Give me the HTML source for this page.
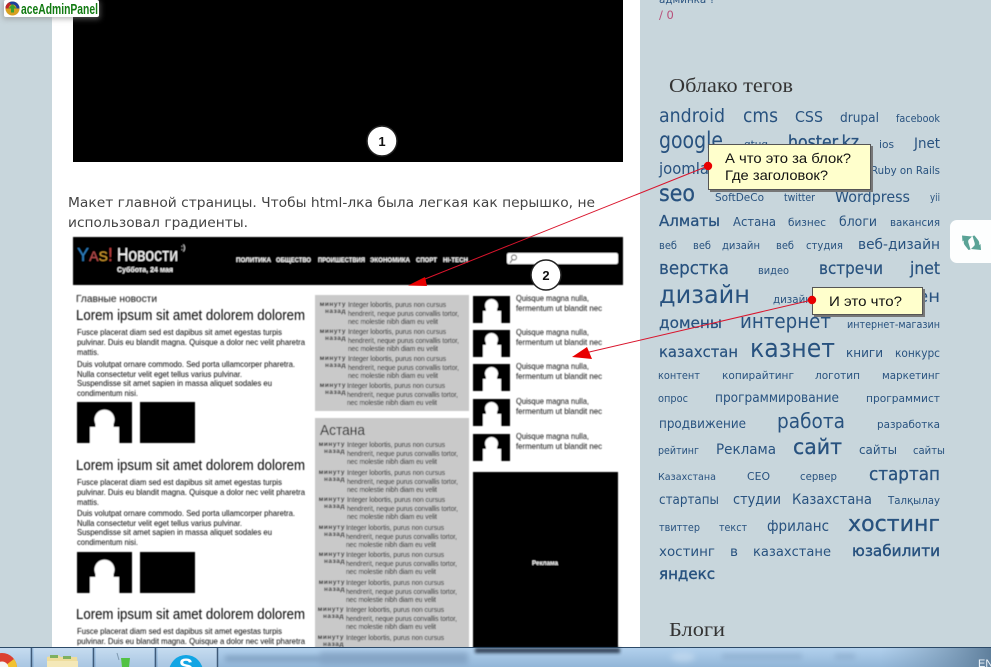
<!DOCTYPE html>
<html lang="ru"><head><meta charset="utf-8"><title>Макет</title>
<style>
html,body{margin:0;padding:0;width:991px;height:667px;overflow:hidden;background:#c8d6dc}
svg{display:block;position:absolute;left:0;top:0}
.t{font-family:"DejaVu Sans","Liberation Sans",sans-serif;fill:#28527f}
.b{font-family:"DejaVu Sans",sans-serif;font-size:13.5px;fill:#444}
.s{font-family:"Liberation Serif",serif;font-size:20px;fill:#333}
.m{font-family:"Liberation Sans",sans-serif;fill:#111}
.h{font-size:14.500px;fill:#000}
.p{font-size:8.500px;fill:#000}
.g{font-size:7.500px;fill:#000}
.r{font-size:6.500px;font-weight:bold;fill:#222;letter-spacing:.5px}
.q{font-size:8.500px;fill:#111}
.w{fill:#fff;font-family:"Liberation Sans",sans-serif}
.n{font-size:6.500px;font-weight:bold}
.a{font-family:"Liberation Sans",sans-serif;font-size:14px;fill:#111}
</style></head><body>
<svg width="991" height="667" viewBox="0 0 991 667" xmlns="http://www.w3.org/2000/svg">
<defs>
<filter id="bl" x="-5%" y="-5%" width="110%" height="110%"><feGaussianBlur stdDeviation="0.45"/></filter>
<filter id="big" x="-20%" y="-100%" width="140%" height="300%"><feGaussianBlur stdDeviation="3"/></filter>
<filter id="sm" x="-10%" y="-200%" width="120%" height="500%"><feGaussianBlur stdDeviation="1.500"/></filter>
<linearGradient id="tb" x1="0" y1="0" x2="0" y2="1"><stop offset="0" stop-color="#b4d2ee"/><stop offset="1" stop-color="#92b6d8"/></linearGradient>
<linearGradient id="tr" x1="0" y1="0" x2="1" y2="0"><stop offset="0" stop-color="#7d9cb8" stop-opacity="0"/><stop offset="1" stop-color="#5f7f9c"/></linearGradient>
<linearGradient id="btn" x1="0" y1="0" x2="0" y2="1"><stop offset="0" stop-color="#c6dcf0"/><stop offset="1" stop-color="#a9c6e2"/></linearGradient>
</defs>

<rect width="991" height="667" fill="#c8d6dc"/>
<rect x="52" y="0" width="588" height="667" fill="#fff"/>
<rect x="73" y="0" width="550" height="162" fill="#000"/>
<circle cx="382" cy="141" r="15" fill="#fff" stroke="#222" stroke-width="1.500"/>
<text x="382" y="146" text-anchor="middle" font-family="Liberation Sans,sans-serif" font-size="13" font-weight="bold" fill="#111">1</text>

<text class="b" x="68" y="207" textLength="527" lengthAdjust="spacingAndGlyphs">Макет главной страницы. Чтобы html-лка была легкая как перышко, не</text>
<text class="b" x="68" y="227" textLength="180" lengthAdjust="spacingAndGlyphs">использовал градиенты.</text>

<g filter="url(#bl)">
<rect x="73" y="237" width="550" height="48" fill="#000"/>
<text x="77" y="261" font-family="Liberation Sans,sans-serif" font-size="18" textLength="36" lengthAdjust="spacingAndGlyphs"><tspan fill="#2f7fc0">Y</tspan><tspan fill="#c05050" font-size="14">A</tspan><tspan fill="#d8a030" font-size="14">S</tspan><tspan fill="#c04040">!</tspan></text>
<text class="w" x="117" y="261" font-size="18" textLength="61" lengthAdjust="spacingAndGlyphs">Новости</text>
<text class="w" x="181" y="250" font-size="7">:)</text>
<text class="w" x="117" y="272" font-size="7.500" font-weight="bold" textLength="56" lengthAdjust="spacingAndGlyphs">Суббота, 24 мая</text>
<text class="w n" x="236" y="262" textLength="35" lengthAdjust="spacingAndGlyphs">ПОЛИТИКА</text>
<text class="w n" x="276" y="262" textLength="35" lengthAdjust="spacingAndGlyphs">ОБЩЕСТВО</text>
<text class="w n" x="318" y="262" textLength="47" lengthAdjust="spacingAndGlyphs">ПРОИШЕСТВИЯ</text>
<text class="w n" x="370" y="262" textLength="40" lengthAdjust="spacingAndGlyphs">ЭКОНОМИКА</text>
<text class="w n" x="416" y="262" textLength="21" lengthAdjust="spacingAndGlyphs">СПОРТ</text>
<text class="w n" x="443" y="262" textLength="25" lengthAdjust="spacingAndGlyphs">HI-TECH</text>
<rect x="507" y="253" width="111" height="11" rx="2" fill="#fff"/>
<circle cx="514" cy="257.500" r="2.500" fill="none" stroke="#222" stroke-width="0.900"/><path d="M512 260l-2 3" stroke="#222" stroke-width="1"/>

<text class="m" x="76" y="302" font-size="10" fill="#222" textLength="81" lengthAdjust="spacingAndGlyphs">Главные новости</text>

<text class="m h" x="76" y="320" textLength="229" lengthAdjust="spacingAndGlyphs">Lorem ipsum sit amet dolorem dolorem</text>
<text class="m p" x="77" y="335" textLength="205" lengthAdjust="spacingAndGlyphs">Fusce placerat diam sed est dapibus sit amet egestas turpis</text>
<text class="m p" x="77" y="345" textLength="228" lengthAdjust="spacingAndGlyphs">pulvinar. Duis eu blandit magna. Quisque a dolor nec velit pharetra</text>
<text class="m p" x="77" y="355" textLength="22" lengthAdjust="spacingAndGlyphs">mattis.</text>
<text class="m p" x="77" y="367" textLength="218" lengthAdjust="spacingAndGlyphs">Duis volutpat ornare commodo. Sed porta ullamcorper pharetra.</text>
<text class="m p" x="77" y="377" textLength="165" lengthAdjust="spacingAndGlyphs">Nulla consectetur velit eget tellus varius pulvinar.</text>
<text class="m p" x="77" y="386" textLength="195" lengthAdjust="spacingAndGlyphs">Suspendisse sit amet sapien in massa aliquet sodales eu</text>
<text class="m p" x="77" y="396" textLength="61" lengthAdjust="spacingAndGlyphs">condimentum nisi.</text>
<rect x="77" y="402" width="55" height="41" fill="#000"/>
<path d="M90 443V427h5.500v-3a10 10 0 1 1 18 0v3H119v16z" fill="#fff"/>
<rect x="140" y="402" width="55" height="41" fill="#000"/>

<text class="m h" x="76" y="470" textLength="229" lengthAdjust="spacingAndGlyphs">Lorem ipsum sit amet dolorem dolorem</text>
<text class="m p" x="77" y="485" textLength="205" lengthAdjust="spacingAndGlyphs">Fusce placerat diam sed est dapibus sit amet egestas turpis</text>
<text class="m p" x="77" y="495" textLength="228" lengthAdjust="spacingAndGlyphs">pulvinar. Duis eu blandit magna. Quisque a dolor nec velit pharetra</text>
<text class="m p" x="77" y="505" textLength="22" lengthAdjust="spacingAndGlyphs">mattis.</text>
<text class="m p" x="77" y="516" textLength="218" lengthAdjust="spacingAndGlyphs">Duis volutpat ornare commodo. Sed porta ullamcorper pharetra.</text>
<text class="m p" x="77" y="526" textLength="165" lengthAdjust="spacingAndGlyphs">Nulla consectetur velit eget tellus varius pulvinar.</text>
<text class="m p" x="77" y="535" textLength="195" lengthAdjust="spacingAndGlyphs">Suspendisse sit amet sapien in massa aliquet sodales eu</text>
<text class="m p" x="77" y="545" textLength="61" lengthAdjust="spacingAndGlyphs">condimentum nisi.</text>
<rect x="77" y="552" width="55" height="41" fill="#000"/>
<path d="M90 593V577h5.500v-3a10 10 0 1 1 18 0v3H119v16z" fill="#fff"/>
<rect x="140" y="552" width="55" height="41" fill="#000"/>

<text class="m h" x="76" y="619" textLength="229" lengthAdjust="spacingAndGlyphs">Lorem ipsum sit amet dolorem dolorem</text>
<text class="m p" x="77" y="634" textLength="205" lengthAdjust="spacingAndGlyphs">Fusce placerat diam sed est dapibus sit amet egestas turpis</text>
<text class="m p" x="77" y="644" textLength="228" lengthAdjust="spacingAndGlyphs">pulvinar. Duis eu blandit magna. Quisque a dolor nec velit pharetra</text>

<rect x="315" y="295" width="154" height="116" fill="#c9c9c9"/>
<rect x="315" y="418" width="154" height="232" fill="#c9c9c9"/>

<text class="m r" x="346" y="306" text-anchor="end">минуту</text><text class="m r" x="346" y="313" text-anchor="end">назад</text>
<text class="m g" x="348" y="307" textLength="98" lengthAdjust="spacingAndGlyphs">Integer lobortis, purus non cursus</text><text class="m g" x="348" y="316" textLength="111" lengthAdjust="spacingAndGlyphs">hendrerit, neque purus convallis tortor,</text><text class="m g" x="348" y="324" textLength="90" lengthAdjust="spacingAndGlyphs">nec molestie nibh diam eu velit</text>

<text class="m r" x="346" y="333" text-anchor="end">минуту</text><text class="m r" x="346" y="340" text-anchor="end">назад</text>
<text class="m g" x="348" y="334" textLength="98" lengthAdjust="spacingAndGlyphs">Integer lobortis, purus non cursus</text><text class="m g" x="348" y="343" textLength="111" lengthAdjust="spacingAndGlyphs">hendrerit, neque purus convallis tortor,</text><text class="m g" x="348" y="351" textLength="90" lengthAdjust="spacingAndGlyphs">nec molestie nibh diam eu velit</text>

<text class="m r" x="346" y="360" text-anchor="end">минуту</text><text class="m r" x="346" y="367" text-anchor="end">назад</text>
<text class="m g" x="348" y="361" textLength="98" lengthAdjust="spacingAndGlyphs">Integer lobortis, purus non cursus</text><text class="m g" x="348" y="370" textLength="111" lengthAdjust="spacingAndGlyphs">hendrerit, neque purus convallis tortor,</text><text class="m g" x="348" y="378" textLength="90" lengthAdjust="spacingAndGlyphs">nec molestie nibh diam eu velit</text>

<text class="m r" x="346" y="387" text-anchor="end">минуту</text><text class="m r" x="346" y="394" text-anchor="end">назад</text>
<text class="m g" x="347" y="388" textLength="98" lengthAdjust="spacingAndGlyphs">Integer lobortis, purus non cursus</text><text class="m g" x="347" y="397" textLength="111" lengthAdjust="spacingAndGlyphs">hendrerit, neque purus convallis tortor,</text><text class="m g" x="347" y="405" textLength="90" lengthAdjust="spacingAndGlyphs">nec molestie nibh diam eu velit</text>

<text class="m" x="320" y="435" font-size="15" fill="#111" textLength="45" lengthAdjust="spacingAndGlyphs">Астана</text>

<text class="m r" x="345" y="446" text-anchor="end">минуту</text><text class="m r" x="345" y="453" text-anchor="end">назад</text>
<text class="m g" x="347" y="447" textLength="98" lengthAdjust="spacingAndGlyphs">Integer lobortis, purus non cursus</text><text class="m g" x="347" y="456" textLength="111" lengthAdjust="spacingAndGlyphs">hendrerit, neque purus convallis tortor,</text><text class="m g" x="347" y="464" textLength="90" lengthAdjust="spacingAndGlyphs">nec molestie nibh diam eu velit</text>

<text class="m r" x="345" y="474" text-anchor="end">минуту</text><text class="m r" x="345" y="481" text-anchor="end">назад</text>
<text class="m g" x="347" y="475" textLength="98" lengthAdjust="spacingAndGlyphs">Integer lobortis, purus non cursus</text><text class="m g" x="347" y="484" textLength="111" lengthAdjust="spacingAndGlyphs">hendrerit, neque purus convallis tortor,</text><text class="m g" x="347" y="492" textLength="90" lengthAdjust="spacingAndGlyphs">nec molestie nibh diam eu velit</text>

<text class="m r" x="345" y="501" text-anchor="end">минуту</text><text class="m r" x="345" y="508" text-anchor="end">назад</text>
<text class="m g" x="347" y="502" textLength="98" lengthAdjust="spacingAndGlyphs">Integer lobortis, purus non cursus</text><text class="m g" x="347" y="511" textLength="111" lengthAdjust="spacingAndGlyphs">hendrerit, neque purus convallis tortor,</text><text class="m g" x="347" y="519" textLength="90" lengthAdjust="spacingAndGlyphs">nec molestie nibh diam eu velit</text>

<text class="m r" x="345" y="529" text-anchor="end">минуту</text><text class="m r" x="345" y="536" text-anchor="end">назад</text>
<text class="m g" x="346" y="530" textLength="98" lengthAdjust="spacingAndGlyphs">Integer lobortis, purus non cursus</text><text class="m g" x="346" y="539" textLength="111" lengthAdjust="spacingAndGlyphs">hendrerit, neque purus convallis tortor,</text><text class="m g" x="346" y="547" textLength="90" lengthAdjust="spacingAndGlyphs">nec molestie nibh diam eu velit</text>

<text class="m r" x="345" y="556" text-anchor="end">минуту</text><text class="m r" x="345" y="563" text-anchor="end">назад</text>
<text class="m g" x="346" y="557" textLength="98" lengthAdjust="spacingAndGlyphs">Integer lobortis, purus non cursus</text><text class="m g" x="346" y="566" textLength="111" lengthAdjust="spacingAndGlyphs">hendrerit, neque purus convallis tortor,</text><text class="m g" x="346" y="574" textLength="90" lengthAdjust="spacingAndGlyphs">nec molestie nibh diam eu velit</text>

<text class="m r" x="345" y="584" text-anchor="end">минуту</text><text class="m r" x="345" y="591" text-anchor="end">назад</text>
<text class="m g" x="346" y="585" textLength="98" lengthAdjust="spacingAndGlyphs">Integer lobortis, purus non cursus</text><text class="m g" x="346" y="594" textLength="111" lengthAdjust="spacingAndGlyphs">hendrerit, neque purus convallis tortor,</text><text class="m g" x="346" y="602" textLength="90" lengthAdjust="spacingAndGlyphs">nec molestie nibh diam eu velit</text>

<text class="m r" x="344" y="611" text-anchor="end">минуту</text><text class="m r" x="344" y="618" text-anchor="end">назад</text>
<text class="m g" x="346" y="612" textLength="98" lengthAdjust="spacingAndGlyphs">Integer lobortis, purus non cursus</text><text class="m g" x="346" y="621" textLength="111" lengthAdjust="spacingAndGlyphs">hendrerit, neque purus convallis tortor,</text><text class="m g" x="346" y="629" textLength="90" lengthAdjust="spacingAndGlyphs">nec molestie nibh diam eu velit</text>

<text class="m r" x="344" y="639" text-anchor="end">минуту</text><text class="m r" x="344" y="646" text-anchor="end">назад</text>
<text class="m g" x="346" y="640" textLength="98" lengthAdjust="spacingAndGlyphs">Integer lobortis, purus non cursus</text>

<path d="M473 296h37v27h-37z M473 330h37v27h-37z M473 364h37v27h-37z M473 399h37v27h-37z M473 434h37v27h-37z" fill="#000"/>
<path d="M483 323v-12h3v-2a6.500 6.500 0 1 1 11 0v2h4v12z" fill="#fff"/>
<path d="M483 357v-12h3v-2a6.500 6.500 0 1 1 11 0v2h4v12z" fill="#fff"/>
<path d="M483 391v-12h3v-2a6.500 6.500 0 1 1 11 0v2h4v12z" fill="#fff"/>
<path d="M483 426v-12h3v-2a6.500 6.500 0 1 1 11 0v2h4v12z" fill="#fff"/>
<path d="M483 461v-12h3v-2a6.500 6.500 0 1 1 11 0v2h4v12z" fill="#fff"/>

<text class="m q" x="516" y="301" textLength="73" lengthAdjust="spacingAndGlyphs">Quisque magna nulla,</text><text class="m q" x="516" y="311" textLength="86" lengthAdjust="spacingAndGlyphs">fermentum ut blandit nec</text>
<text class="m q" x="516" y="335" textLength="73" lengthAdjust="spacingAndGlyphs">Quisque magna nulla,</text><text class="m q" x="516" y="345" textLength="86" lengthAdjust="spacingAndGlyphs">fermentum ut blandit nec</text>
<text class="m q" x="516" y="369" textLength="73" lengthAdjust="spacingAndGlyphs">Quisque magna nulla,</text><text class="m q" x="516" y="379" textLength="86" lengthAdjust="spacingAndGlyphs">fermentum ut blandit nec</text>
<text class="m q" x="516" y="404" textLength="73" lengthAdjust="spacingAndGlyphs">Quisque magna nulla,</text><text class="m q" x="516" y="414" textLength="86" lengthAdjust="spacingAndGlyphs">fermentum ut blandit nec</text>
<text class="m q" x="516" y="439" textLength="73" lengthAdjust="spacingAndGlyphs">Quisque magna nulla,</text><text class="m q" x="516" y="449" textLength="86" lengthAdjust="spacingAndGlyphs">fermentum ut blandit nec</text>

<rect x="473" y="472" width="145" height="177" fill="#000"/>
<text class="w" x="532" y="565" font-size="6.500" font-weight="bold" textLength="26" lengthAdjust="spacingAndGlyphs">Реклама</text>
</g>

<circle cx="546" cy="275" r="15" fill="#fff" stroke="#222" stroke-width="1.500"/>
<text x="546" y="280" text-anchor="middle" font-family="Liberation Sans,sans-serif" font-size="13" font-weight="bold" fill="#111">2</text>

<!-- sidebar -->
<text class="t" x="659" y="3" font-size="11" fill="#3a6088" textLength="56" lengthAdjust="spacingAndGlyphs">админка ?</text>
<text x="659" y="19" font-family="DejaVu Sans,sans-serif" font-size="11.500" fill="#b8507a">/ 0</text>
<text class="s" x="669" y="92" textLength="124" lengthAdjust="spacingAndGlyphs">Облако тегов</text>

<text class="t" x="659" y="122" font-size="19" textLength="66" lengthAdjust="spacingAndGlyphs">android</text>
<text class="t" x="743" y="122" font-size="19" textLength="35" lengthAdjust="spacingAndGlyphs">cms</text>
<text class="t" x="795" y="122" font-size="15" fill="#3a6490" textLength="28" lengthAdjust="spacingAndGlyphs">CSS</text>
<text class="t" x="840" y="122" font-size="13.500" fill="#3a6490" textLength="39" lengthAdjust="spacingAndGlyphs">drupal</text>
<text class="t" x="896" y="122" font-size="11" fill="#3a6490" textLength="44" lengthAdjust="spacingAndGlyphs">facebook</text>

<text class="t" x="659" y="148" font-size="23" textLength="64" lengthAdjust="spacingAndGlyphs">google</text>
<text class="t" x="744" y="148" font-size="11" fill="#3a6490" textLength="24" lengthAdjust="spacingAndGlyphs">gtug</text>
<text class="t" x="788" y="148" font-size="18" stroke="#28527f" stroke-width=".3" textLength="71" lengthAdjust="spacingAndGlyphs">hoster.kz</text>
<text class="t" x="879" y="148" font-size="11" fill="#3a6490" textLength="15" lengthAdjust="spacingAndGlyphs">ios</text>
<text class="t" x="914" y="148" font-size="14" fill="#3a6490" textLength="26" lengthAdjust="spacingAndGlyphs">Jnet</text>

<text class="t" x="659" y="174" font-size="16" fill="#3a6490" textLength="50" lengthAdjust="spacingAndGlyphs">joomla</text>
<text class="t" x="871" y="174" font-size="11" fill="#3a6490" textLength="69" lengthAdjust="spacingAndGlyphs">Ruby on Rails</text>

<text class="t" x="659" y="201" font-size="23" stroke="#28527f" stroke-width=".3" textLength="36" lengthAdjust="spacingAndGlyphs">seo</text>
<text class="t" x="715" y="201" font-size="11" fill="#3a6490" textLength="49" lengthAdjust="spacingAndGlyphs">SoftDeCo</text>
<text class="t" x="784" y="201" font-size="10.500" fill="#3a6490" textLength="31" lengthAdjust="spacingAndGlyphs">twitter</text>
<text class="t" x="835" y="202" font-size="15" fill="#3a6490" textLength="75" lengthAdjust="spacingAndGlyphs">Wordpress</text>
<text class="t" x="930" y="201" font-size="10.500" fill="#3a6490" textLength="10" lengthAdjust="spacingAndGlyphs">yii</text>

<text class="t" x="659" y="226" font-size="15.500" stroke="#28527f" stroke-width=".3" textLength="61" lengthAdjust="spacingAndGlyphs">Алматы</text>
<text class="t" x="733" y="226" font-size="12.500" fill="#3a6490" textLength="43" lengthAdjust="spacingAndGlyphs">Астана</text>
<text class="t" x="788" y="226" font-size="11" fill="#3a6490" textLength="38" lengthAdjust="spacingAndGlyphs">бизнес</text>
<text class="t" x="839" y="226" font-size="13" fill="#3a6490" textLength="38" lengthAdjust="spacingAndGlyphs">блоги</text>
<text class="t" x="890" y="226" font-size="11" fill="#3a6490" textLength="50" lengthAdjust="spacingAndGlyphs">вакансия</text>

<text class="t" x="659" y="249" font-size="10.500" fill="#3a6490" textLength="18" lengthAdjust="spacingAndGlyphs">веб</text>
<text class="t" x="693" y="249" font-size="10.500" fill="#3a6490" textLength="18" lengthAdjust="spacingAndGlyphs">веб</text>
<text class="t" x="722" y="249" font-size="10.500" fill="#3a6490" textLength="38" lengthAdjust="spacingAndGlyphs">дизайн</text>
<text class="t" x="776" y="249" font-size="10.500" fill="#3a6490" textLength="18" lengthAdjust="spacingAndGlyphs">веб</text>
<text class="t" x="806" y="249" font-size="10.500" fill="#3a6490" textLength="37" lengthAdjust="spacingAndGlyphs">студия</text>
<text class="t" x="858" y="249" font-size="14.500" fill="#3a6490" textLength="82" lengthAdjust="spacingAndGlyphs">веб-дизайн</text>

<text class="t" x="659" y="274" font-size="17.500" stroke="#28527f" stroke-width=".2" textLength="70" lengthAdjust="spacingAndGlyphs">верстка</text>
<text class="t" x="758" y="274" font-size="10.500" fill="#3a6490" textLength="31" lengthAdjust="spacingAndGlyphs">видео</text>
<text class="t" x="819" y="274" font-size="16.500" stroke="#28527f" stroke-width=".2" textLength="64" lengthAdjust="spacingAndGlyphs">встречи</text>
<text class="t" x="910" y="274" font-size="16.500" stroke="#28527f" stroke-width=".2" textLength="30" lengthAdjust="spacingAndGlyphs">jnet</text>

<text class="t" x="659" y="303" font-size="25" textLength="91" lengthAdjust="spacingAndGlyphs">дизайн</text>
<text class="t" x="773" y="303" font-size="11" fill="#3a6490" textLength="39" lengthAdjust="spacingAndGlyphs">дизайн</text>
<text class="t" x="880" y="302" font-size="16.500" textLength="60" lengthAdjust="spacingAndGlyphs">домен</text>

<text class="t" x="659" y="328" font-size="15.500" stroke="#28527f" stroke-width=".2" textLength="63" lengthAdjust="spacingAndGlyphs">домены</text>
<text class="t" x="740" y="328" font-size="20.500" textLength="91" lengthAdjust="spacingAndGlyphs">интернет</text>
<text class="t" x="847" y="328" font-size="11" fill="#3a6490" textLength="93" lengthAdjust="spacingAndGlyphs">интернет-магазин</text>

<text class="t" x="659" y="357" font-size="15.500" stroke="#28527f" stroke-width=".2" textLength="79" lengthAdjust="spacingAndGlyphs">казахстан</text>
<text class="t" x="750" y="357" font-size="26" textLength="85" lengthAdjust="spacingAndGlyphs">казнет</text>
<text class="t" x="846" y="357" font-size="12.500" fill="#3a6490" textLength="37" lengthAdjust="spacingAndGlyphs">книги</text>
<text class="t" x="895" y="357" font-size="11.500" fill="#3a6490" textLength="45" lengthAdjust="spacingAndGlyphs">конкурс</text>

<text class="t" x="658" y="379" font-size="10.500" fill="#3a6490" textLength="42" lengthAdjust="spacingAndGlyphs">контент</text>
<text class="t" x="722" y="379" font-size="11" fill="#3a6490" textLength="72" lengthAdjust="spacingAndGlyphs">копирайтинг</text>
<text class="t" x="815" y="379" font-size="11" fill="#3a6490" textLength="45" lengthAdjust="spacingAndGlyphs">логотип</text>
<text class="t" x="882" y="379" font-size="11" fill="#3a6490" textLength="58" lengthAdjust="spacingAndGlyphs">маркетинг</text>

<text class="t" x="658" y="402" font-size="10.500" fill="#3a6490" textLength="30" lengthAdjust="spacingAndGlyphs">опрос</text>
<text class="t" x="715" y="402" font-size="13.500" fill="#3a6490" textLength="124" lengthAdjust="spacingAndGlyphs">программирование</text>
<text class="t" x="866" y="402" font-size="11" fill="#3a6490" textLength="74" lengthAdjust="spacingAndGlyphs">программист</text>

<text class="t" x="659" y="428" font-size="13.500" fill="#3a6490" textLength="87" lengthAdjust="spacingAndGlyphs">продвижение</text>
<text class="t" x="777" y="428" font-size="20.500" textLength="68" lengthAdjust="spacingAndGlyphs">работа</text>
<text class="t" x="877" y="428" font-size="11" fill="#3a6490" textLength="63" lengthAdjust="spacingAndGlyphs">разработка</text>

<text class="t" x="658" y="454" font-size="10.500" fill="#3a6490" textLength="41" lengthAdjust="spacingAndGlyphs">рейтинг</text>
<text class="t" x="716" y="454" font-size="14.500" fill="#3a6490" textLength="60" lengthAdjust="spacingAndGlyphs">Реклама</text>
<text class="t" x="793" y="454" font-size="21.500" stroke="#28527f" stroke-width=".3" textLength="49" lengthAdjust="spacingAndGlyphs">сайт</text>
<text class="t" x="859" y="454" font-size="12.500" fill="#3a6490" textLength="38" lengthAdjust="spacingAndGlyphs">сайты</text>
<text class="t" x="913" y="454" font-size="10.500" fill="#3a6490" textLength="32" lengthAdjust="spacingAndGlyphs">сайты</text>

<text class="t" x="658" y="480" font-size="10" fill="#3a6490" textLength="58" lengthAdjust="spacingAndGlyphs">Казахстана</text>
<text class="t" x="747" y="480" font-size="10.500" fill="#3a6490" textLength="23" lengthAdjust="spacingAndGlyphs">СЕО</text>
<text class="t" x="800" y="480" font-size="10.500" fill="#3a6490" textLength="37" lengthAdjust="spacingAndGlyphs">сервер</text>
<text class="t" x="869" y="480" font-size="17.500" stroke="#28527f" stroke-width=".3" textLength="71" lengthAdjust="spacingAndGlyphs">стартап</text>

<text class="t" x="659" y="504" font-size="13.500" fill="#3a6490" textLength="60" lengthAdjust="spacingAndGlyphs">стартапы</text>
<text class="t" x="733" y="504" font-size="14.500" fill="#3a6490" textLength="48" lengthAdjust="spacingAndGlyphs">студии</text>
<text class="t" x="792" y="504" font-size="14.500" fill="#3a6490" textLength="80" lengthAdjust="spacingAndGlyphs">Казахстана</text>
<text class="t" x="888" y="504" font-size="11" fill="#3a6490" textLength="52" lengthAdjust="spacingAndGlyphs">Талқылау</text>

<text class="t" x="659" y="531" font-size="10.500" fill="#3a6490" textLength="41" lengthAdjust="spacingAndGlyphs">твиттер</text>
<text class="t" x="719" y="531" font-size="10.500" fill="#3a6490" textLength="28" lengthAdjust="spacingAndGlyphs">текст</text>
<text class="t" x="767" y="531" font-size="15.500" fill="#3a6490" textLength="62" lengthAdjust="spacingAndGlyphs">фриланс</text>
<text class="t" x="848" y="531" font-size="22" stroke="#28527f" stroke-width=".3" textLength="92" lengthAdjust="spacingAndGlyphs">хостинг</text>

<text class="t" x="659" y="556" font-size="13.500" fill="#3a6490" textLength="56" lengthAdjust="spacingAndGlyphs">хостинг</text>
<text class="t" x="730" y="556" font-size="13.500" fill="#3a6490" textLength="8" lengthAdjust="spacingAndGlyphs">в</text>
<text class="t" x="753" y="556" font-size="13.500" fill="#3a6490" textLength="78" lengthAdjust="spacingAndGlyphs">казахстане</text>
<text class="t" x="852" y="556" font-size="15" stroke="#28527f" stroke-width=".4" textLength="88" lengthAdjust="spacingAndGlyphs">юзабилити</text>
<text class="t" x="659" y="579" font-size="15" stroke="#28527f" stroke-width=".4" textLength="56" lengthAdjust="spacingAndGlyphs">яндекс</text>

<text class="s" x="669" y="636" textLength="56" lengthAdjust="spacingAndGlyphs">Блоги</text>

<!-- refresh widget -->
<rect x="950" y="220" width="60" height="43" rx="7" fill="#fdfefe"/>
<path d="M962 235.500l10 1-2.500 2.500c-1.500 1-1.500 2.500-1 4l2 6.500-2 .5-3.500-4.500c-1.500-2-1.500-3.500-1-5l-1.500 1z" fill="#5aa396"/>
<path d="M981 250l-10-1 2.500-2.500c1.500-1 1.500-2.500 1-4l-2-6.500 2-.5 3.500 4.500c1.500 2 1.500 3.500 1 5l1.500-1z" fill="#5aa396"/>

<!-- badge -->
<rect x="3" y="1" width="97" height="18" fill="#888" opacity=".6" filter="url(#big)"/>
<rect x="4" y="0" width="95" height="17" rx="2" fill="#fff"/>
<circle cx="12.500" cy="8.500" r="7" fill="#d8a020"/>
<path d="M12.500 1.500a7 7 0 0 1 7 7h-3a4 4 0 0 0-8 0h-3a7 7 0 0 1 7-7z" fill="#1c3f9c"/>
<path d="M5.500 8.500a7 7 0 0 1 4-6.300l1.500 2.600a4 4 0 0 0-2.500 3.700z" fill="#c02828"/>
<path d="M12.500 4l4 4.500h-2.500v4h-3v-4h-2.500z" fill="#3aa030"/>
<text x="21" y="14" font-family="Liberation Sans,sans-serif" font-size="14.500" font-weight="bold" fill="#117a11" textLength="77" lengthAdjust="spacingAndGlyphs">aceAdminPanel</text>

<!-- callouts -->
<line x1="708" y1="166" x2="420" y2="281" stroke="#d9142c" stroke-width="1"/>
<path d="M408 285.500L425 277L427 286z" fill="#e80000"/>
<line x1="812" y1="300" x2="585" y2="353" stroke="#d9142c" stroke-width="1"/>
<path d="M572 357L587 347L592 359z" fill="#e80000"/>

<rect x="710" y="146" width="163" height="46" fill="#777"/>
<rect x="708.500" y="144.500" width="162" height="45" fill="#ffffcc" stroke="#555"/>
<circle cx="708" cy="166" r="4.200" fill="#e80000"/>
<text class="a" x="725" y="163" textLength="126" lengthAdjust="spacingAndGlyphs">А что это за блок?</text>
<text class="a" x="725" y="180" textLength="103" lengthAdjust="spacingAndGlyphs">Где заголовок?</text>

<rect x="814" y="289" width="111" height="28" fill="#777"/>
<rect x="812.500" y="287.500" width="110" height="27" fill="#ffffcc" stroke="#555"/>
<circle cx="812" cy="300" r="4.200" fill="#e80000"/>
<text class="a" x="829" y="306" textLength="73" lengthAdjust="spacingAndGlyphs">И это что?</text>

<!-- taskbar -->
<rect x="0" y="647" width="991" height="20" fill="url(#tb)"/>
<rect x="0" y="647" width="991" height="1" fill="#2c4a68"/>
<rect x="880" y="648" width="111" height="19" fill="url(#tr)"/>
<rect x="0" y="648" width="30" height="19" fill="url(#btn)"/>
<rect x="34" y="648" width="58" height="19" fill="url(#btn)"/>
<rect x="96" y="648" width="58" height="19" fill="url(#btn)"/>
<rect x="158" y="648" width="59" height="19" fill="url(#btn)"/>
<path d="M31.500 648v19M93.500 648v19M155.500 648v19M217.500 648v19" stroke="#3f5a78" stroke-width="1.500"/>
<g filter="url(#big)" opacity=".55">
<rect x="225" y="656" width="110" height="5" fill="#5f7ea0"/>
<rect x="320" y="652" width="148" height="12" fill="#6f8eb0"/>
<ellipse cx="683" cy="657" rx="12" ry="5" fill="#cfe2f4"/>
<rect x="722" y="654" width="80" height="5" fill="#7f9ec0"/>
<rect x="835" y="654" width="20" height="5" fill="#7f9ec0"/>
</g>
<rect x="475" y="648" width="145" height="5" fill="#1c2a3c" opacity=".85" filter="url(#sm)"/>
<circle cx="2" cy="668" r="15" fill="#dc4030"/>
<path d="M17 668a15 15 0 0 0-3-9l-12 9z" fill="#f2c230"/>
<circle cx="2" cy="668" r="6.500" fill="#f4f4f4"/>
<path d="M47 657l11-2 3 2h16l1 10H47z" fill="#eedd9c"/>
<path d="M50 655h8v3h-8zM63 656h8v3h-8z" fill="#7fb060"/>
<path d="M47 661h31v6H47z" fill="#f4e8b8"/>
<path d="M117 653l2 7" stroke="#7f9ab0" stroke-width="1"/>
<path d="M121 658h9l-1 9h-7z" fill="#52c244"/>
<circle cx="186" cy="672" r="17" fill="#12a5e4"/>
<text x="186" y="673" text-anchor="middle" font-family="Liberation Sans,sans-serif" font-size="21" font-weight="bold" fill="#fff">S</text>
<text x="978" y="667" font-family="Liberation Sans,sans-serif" font-size="11" fill="#f0f6fc">EN</text>
</svg>
</body></html>
